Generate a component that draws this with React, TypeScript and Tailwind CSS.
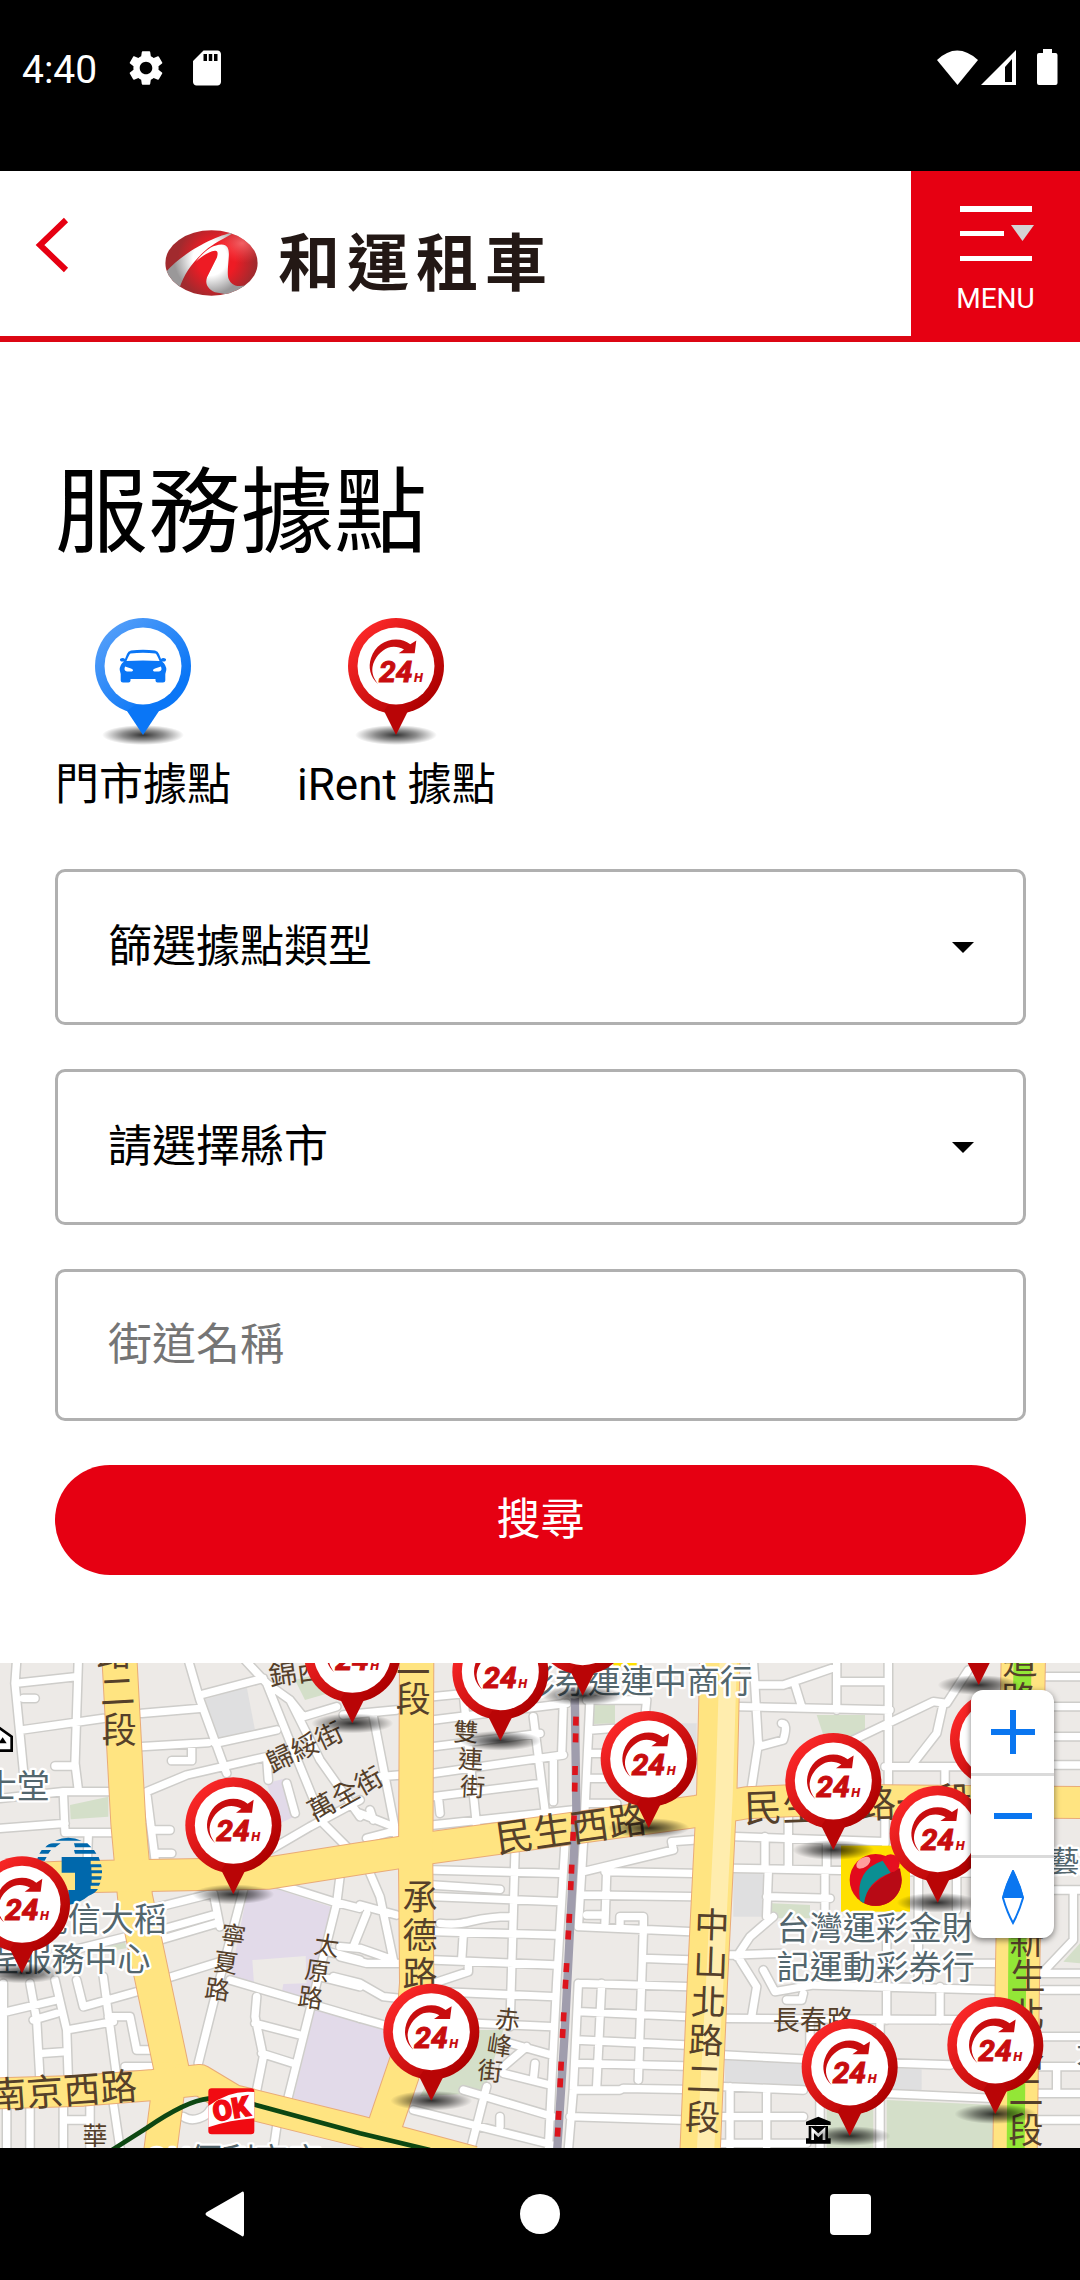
import * as React from "react";
import { useState } from "react";
import { MdSettings, MdSdCard } from "react-icons/md";

interface MapLabel {
  text: string;
  x: number;
  y: number;
  size: number;
  rotate?: number;
  poi?: boolean;
}

const BRANCH_TYPES = ["篩選據點類型", "門市據點", "iRent 據點"];
const CITIES = ["請選擇縣市", "台北市", "新北市", "桃園市"];

// map units: 3 units = 1px
const PINS = [
  [2994, 475],
  [2936, 105],
  [1748, 137],
  [1057, 220],
  [1501, 272],
  [1946, 534],
  [2500, 600],
  [700, 733],
  [2813, 758],
  [66, 970],
  [1294, 1352],
  [2986, 1392],
  [2549, 1458],
];

const AREAS = [
  { fill: "#dfdfe0", d: "M610 150L740 110L765 240L645 280Z" },
  { fill: "#d4dfc9", d: "M210 465L325 440V500L212 508Z" },
  { fill: "#d4dfc9", d: "M885 90L960 70L985 130L915 150Z" },
  { fill: "#d4dfc9", d: "M260 880L370 855L380 895L270 912Z" },
  { fill: "#e2dae9", d: "M800 400L858 385L882 500L840 520Z" },
  { fill: "#e2dae9", d: "M745 710H810L992 770L930 1068L690 990Z" },
  { fill: "#edeae7", d: "M757 930L917 918L920 1000L850 1002L845 1030L762 1002Z" },
  { fill: "#e2dae9", d: "M945 1080L1180 1140V1220L1118 1408L880 1345Z" },
  { fill: "#d4dfc9", d: "M1780 165H1845V220L1780 222Z" },
  { fill: "#d4dfc9", d: "M1370 1140H1510L1450 1330L1260 1338Z" },
  { fill: "#dfdfe0", d: "M2000 220H2090V290H2030Z" },
  { fill: "#d4dfc9", d: "M2450 195H2595V260L2470 255Z" },
  { fill: "#dfdfe0", d: "M2200 670H2290V800H2200Z" },
  { fill: "#d4dfc9", d: "M2315 760L2430 765V805H2315Z" },
  { fill: "#dfdfe0", d: "M2175 1230L2765 1258V1325L2175 1295Z" },
  { fill: "#d4dfc9", d: "M2660 1350L2980 1365V1494H2660Z" },
  { fill: "#d4dfc9", d: "M2480 1370H2620V1494H2480Z" },
  { fill: "#d4dfc9", d: "M3240 880L3190 935L3240 940Z" },
];

const STREETS_WEST =
  "M50 30L45 100L75 410M45 100L230 80M235 30L225 340L235 420M65 240L310 205M70 145H105M165 348H225M0 445L190 425H330M190 425L195 548H340M0 535L195 520M265 550L262 630M425 190L600 175M425 290L625 278M565 30L600 150L680 370M600 135L790 85M515 332H575V290M440 425L560 375L800 320M645 280L830 240M735 30L800 100L880 300L970 520L1050 600M800 100L870 150L960 330L1080 500M870 150L910 200L1010 170M860 400L885 490M810 600L930 530L1080 450M440 430L465 625M465 540H510M470 610H515M460 775L640 730L660 830M480 870L650 820M500 985L660 935M730 720L640 1060L595 1240M810 695L1000 755L1080 775M1020 680L1010 760L930 1080L865 1340M690 990L1080 1105M770 1040L765 1100L790 1220L770 1320M765 1120L900 1155M785 1210L880 1240M985 905L1080 930M960 980L1080 1010M0 1090L170 1050M90 1000L110 1110L120 1290M100 1110L170 1090M165 990L200 1140L205 1290M200 1140L340 1115M230 990L250 1070L410 1025M310 980L350 1280M325 1100H390L410 1200H455M125 1210L200 1205M375 1250H465M10 1000V1290M90 1370V1494M190 1370V1494M20 1370V1494M270 1360V1494M200 1410H270M340 1360L360 1494M550 1400C580 1420 620 1400 630 1380M830 1430L820 1500M380 39L400 500M800 320L805 390M480 840L640 795M180 910L380 860";

const STREETS_CENTER =
  "M220 140L320 130M220 210L620 160M220 290L540 250M220 370L610 315M220 440L540 400M220 525L640 480M520 200L555 480M310 130L350 530M610 160L605 315M580 320V455M235 440L240 490M40 200L110 560M-50 195L110 180M60 380L120 375M0 490L100 530M20 565L115 540M465 610L450 1130M220 660L600 670M215 705L420 718M220 740L600 755M240 820C330 830 330 800 450 800M225 845L590 855M225 930L585 945M310 850L305 930M325 950V965L220 1000M235 1025L580 1040M350 1120L575 1130M450 1180L575 1215M430 1270L570 1305M310 1320L580 1400M160 1380L580 1485M520 1290L525 1240M380 1310L335 1485M420 1400V1430M430 1250L500 1190M615 580L590 1000L565 1500M690 150L670 580L655 830M680 150H860M690 240L760 235M690 310H740M690 385H740M690 460H770M670 665L940 600L935 575L1000 570M735 665L1000 670M670 735L995 740M660 830L990 845M740 665L735 820M680 795H730M780 830V800H850V840M850 840L835 1290M850 925L990 930M655 1000L985 1010M655 1085L980 1100M650 1170L975 1185M650 1240L970 1248M640 1320H780L790 1315L965 1318M630 1400L965 1410M655 1000L640 1320L625 1500M725 1000L710 1310M860 150L855 200M30 670L60 740L100 930M0 765L110 795M-60 890L0 895L100 930M-60 920L20 940H120M-80 980L0 1000L70 1040L120 1045M0 1105L90 1130M20 790L-20 890M30 480L40 510";

const STREETS_EAST =
  "M100 30L115 280L95 410M60 170L510 180M115 105H190L350 50M350 30V180M360 95H500M505 30V400M225 105L245 170M115 290L190 270Q205 220 185 220M400 270L640 155L680 160L745 60M670 160L650 250L580 340M495 350H840M675 350V405M980 80H1090M980 170H1090M990 260H1090M990 345H1090M205 500V655M45 560L490 575M40 655L830 670M135 560V655M320 570V655M140 740L330 745M145 660L140 800M315 660V780M160 800L90 860L50 920M30 915L180 910M60 930L110 1010L95 1100M130 960L165 1025L280 1005L830 1020M200 1050H245L250 1030M20 1105L830 1110M500 870V1110M660 1010V1110M10 1215L400 1235L690 1245M10 1310L250 1320M30 1310V1500M140 1320V1500M0 1400H130M140 1400H250M480 1110V1500M490 1330L820 1345M0 1480H260M270 1110V1215M300 1320V1500M495 500V580M595 670V1010M700 940H830M975 960L1060 870V720M960 970H1090M965 1020H1090M1000 720H1090M955 1160H1090M955 1250H1090M955 1330H1090M955 1410H1090M1010 1250V1330M710 670V780";

const LABELS: MapLabel[] = [
  { text: "路", x: 342, y: 14, size: 105 },
  { text: "二", x: 352, y: 128, size: 105, rotate: -3 },
  { text: "段", x: 358, y: 243, size: 105 },
  { text: "錦西", x: 890, y: 68, size: 84, rotate: -8 },
  { text: "歸綏街", x: 915, y: 293, size: 81, rotate: -25 },
  { text: "萬全街", x: 1037, y: 433, size: 81, rotate: -29 },
  { text: "寧", x: 700, y: 858, size: 75, rotate: 8 },
  { text: "夏", x: 677, y: 940, size: 75, rotate: 8 },
  { text: "路", x: 652, y: 1020, size: 75, rotate: 8 },
  { text: "太", x: 980, y: 888, size: 75, rotate: 8 },
  { text: "原", x: 952, y: 965, size: 75, rotate: 8 },
  { text: "路", x: 932, y: 1045, size: 75, rotate: 8 },
  { text: "南京西路", x: 190, y: 1325, size: 111, rotate: -4 },
  { text: "華", x: 285, y: 1460, size: 75 },
  { text: "二", x: 1240, y: 38, size: 105 },
  { text: "段", x: 1240, y: 152, size: 105 },
  { text: "雙", x: 1398, y: 248, size: 75, rotate: 3 },
  { text: "連", x: 1412, y: 330, size: 75, rotate: 3 },
  { text: "街", x: 1418, y: 412, size: 75, rotate: 3 },
  { text: "民生西路", x: 1713, y: 538, size: 114, rotate: -8 },
  { text: "承", x: 1260, y: 745, size: 105 },
  { text: "德", x: 1260, y: 860, size: 105 },
  { text: "路", x: 1260, y: 975, size: 105 },
  { text: "赤", x: 1523, y: 1110, size: 75, rotate: 6 },
  { text: "峰", x: 1498, y: 1188, size: 75, rotate: 9 },
  { text: "街", x: 1470, y: 1265, size: 75, rotate: 6 },
  { text: "中", x: 2136, y: 828, size: 105, rotate: 2 },
  { text: "山", x: 2132, y: 942, size: 105, rotate: 2 },
  { text: "北", x: 2126, y: 1060, size: 105, rotate: 2 },
  { text: "路", x: 2118, y: 1175, size: 105, rotate: 2 },
  { text: "二", x: 2112, y: 1290, size: 105, rotate: 2 },
  { text: "段", x: 2108, y: 1406, size: 105, rotate: 2 },
  { text: "民生東路一段", x: 2574, y: 466, size: 114, rotate: -2 },
  { text: "長春路", x: 2440, y: 1112, size: 81 },
  { text: "道", x: 3060, y: 38, size: 105 },
  { text: "路", x: 3056, y: 150, size: 105 },
  { text: "新", x: 3080, y: 878, size: 105 },
  { text: "生", x: 3084, y: 982, size: 105 },
  { text: "北", x: 3082, y: 1100, size: 105 },
  { text: "路", x: 3080, y: 1215, size: 105 },
  { text: "二", x: 3078, y: 1330, size: 105 },
  { text: "段", x: 3078, y: 1445, size: 105 },
  { text: "士堂", x: 50, y: 410, size: 99, poi: true },
  { text: "電信大稻", x: 302, y: 808, size: 99, poi: true },
  { text: "埕服務中心", x: 204, y: 928, size: 99, poi: true },
  { text: "OK便利商店", x: 700, y: 1530, size: 99, poi: true },
  { text: "彩券連連中商行", x: 1912, y: 93, size: 99, poi: true },
  { text: "台灣運彩金財", x: 2627, y: 834, size: 99, poi: true },
  { text: "記運動彩券行", x: 2627, y: 952, size: 99, poi: true },
  { text: "藝文", x: 3238, y: 636, size: 87, poi: true },
  { text: "大", x: 3272, y: 1210, size: 87, poi: true },
];

function Gradients() {
  return (
    <svg className="absolute h-0 w-0" aria-hidden="true">
      <defs>
        <linearGradient id="ringRed" x1="0.1" y1="0.1" x2="0.85" y2="0.85">
          <stop offset="0" stopColor="#ff2a2a" />
          <stop offset="1" stopColor="#ae0000" />
        </linearGradient>
        <linearGradient id="ringBlue" x1="0.1" y1="0.1" x2="0.75" y2="0.8">
          <stop offset="0" stopColor="#559ff9" />
          <stop offset="1" stopColor="#0a76f6" />
        </linearGradient>
        <radialGradient id="pinShadow">
          <stop offset="0" stopColor="#000" stopOpacity="0.8" />
          <stop offset="0.5" stopColor="#000" stopOpacity="0.45" />
          <stop offset="1" stopColor="#000" stopOpacity="0" />
        </radialGradient>
      </defs>
    </svg>
  );
}

// the tip of the pin sits at 0,0
function RentPin() {
  return (
    <g>
      <ellipse rx="41" ry="10" fill="url(#pinShadow)" />
      <circle cy="-69" r="48" fill="url(#ringRed)" />
      <path d="M-12 -24L0 0L12 -24L8 -30H-8Z" fill="#b90506" />
      <circle cy="-69" r="38.5" fill="#fff" />
      <path
        d="M-18 -51C-26 -58 -28 -68 -25 -77C-21 -89 -11 -95.500 0 -95.500C6 -95.500 10 -94 14.300 -90.700L20.300 -94.500L18.700 -81.700H2.700L8 -85.500C3 -88.500 -3 -89 -8 -87.300C-15 -84.500 -22 -77 -23.500 -68C-24.500 -62 -22 -56 -18 -51Z"
        fill="#c80d0f"
      />
      <text
        x="-17"
        y="-53"
        fontSize="30"
        strokeWidth="1"
        className="fill-[#c80d0f] stroke-[#c80d0f] font-['Roboto',sans-serif] font-bold italic"
      >
        24
      </text>
      <text
        x="18"
        y="-53"
        fontSize="13"
        className="fill-[#c80d0f] font-['Roboto',sans-serif] font-black italic"
      >
        H
      </text>
    </g>
  );
}

function StorePin() {
  return (
    <g>
      <ellipse rx="41" ry="10" fill="url(#pinShadow)" />
      <circle cy="-69" r="48" fill="url(#ringBlue)" />
      <path d="M-16 -24L0 0L16 -24L8 -30H-8Z" fill="#0a76f6" />
      <circle cy="-69" r="38.5" fill="#fff" />
      <path
        fillRule="evenodd"
        fill="#0a76f6"
        d="M-12 -84.500Q0 -86 12 -84.500Q15 -84 16 -81L18 -76Q20 -78 23 -76Q23.500 -73 19 -73.500Q23.500 -70 23.300 -65L22.300 -61V-54.500Q22.300 -52.500 20 -52.500H14.500Q12.500 -52.500 12.500 -54.500V-56H-12.500V-54.500Q-12.500 -52.500 -14.500 -52.500H-20Q-22.300 -52.500 -22.300 -54.500V-61L-23.300 -65Q-23.500 -70 -19 -73.500Q-23.500 -73 -23 -76Q-20 -78 -18 -76L-16 -81Q-15 -84 -12 -84.500ZM-12.500 -81.500Q-14 -80.500 -16.500 -74Q0 -75 16.500 -74Q14 -80.500 12.500 -81.500Q0 -83 -12.500 -81.500ZM-18 -68.500Q-19.500 -64 -16 -63.500H-11Q-8.500 -65 -12 -66.500ZM18 -68.500Q19.500 -64 16 -63.500H11Q8.500 -65 12 -66.500Z"
      />
    </g>
  );
}

function BrandMark() {
  return (
    <svg viewBox="29 29 281 200" className="h-[66px] w-[93px]" aria-hidden="true">
      <defs>
        <radialGradient id="brandRed" gradientUnits="userSpaceOnUse" cx="185" cy="120" r="140">
          <stop offset="0.4" stopColor="#ee1b24" />
          <stop offset="0.85" stopColor="#a12a2e" />
        </radialGradient>
        <radialGradient id="brandShine" cx="0.83" cy="0.2" r="0.3">
          <stop offset="0" stopColor="#ff7074" stopOpacity="0.8" />
          <stop offset="1" stopColor="#ff4a4f" stopOpacity="0" />
        </radialGradient>
        <radialGradient id="brandSilver" gradientUnits="userSpaceOnUse" cx="165" cy="115" r="115">
          <stop offset="0.45" stopColor="#fff" />
          <stop offset="0.95" stopColor="#9a9899" />
        </radialGradient>
        <clipPath id="brandClip">
          <ellipse cx="169.500" cy="129" rx="140" ry="99" />
        </clipPath>
      </defs>
      <g clipPath="url(#brandClip)">
        <rect x="29" y="29" width="281" height="200" fill="url(#brandRed)" />
        <rect x="29" y="29" width="281" height="200" fill="url(#brandShine)" />
        <path
          d="M240 36C195 42 90 88 28 160L72 206C88 160 110 128 150 92C175 70 208 55 240 36Z"
          fill="url(#brandSilver)"
        />
        <path
          d="M122 125C148 92 172 74 200 73C220 74 223 88 222 108C220 140 216 165 222 178C230 196 246 203 275 196L240 228L180 218C155 205 150 190 156 172L186 112C190 98 188 91 180 92C162 94 145 105 122 125Z"
          fill="url(#brandSilver)"
        />
      </g>
    </svg>
  );
}

function StatusBar() {
  return (
    <div className="flex h-[171px] items-start bg-black pt-[47px] pr-[22px] pl-[22px] text-white">
      <span className="text-[39px] leading-[46px]">4:40</span>
      <MdSettings className="ml-[28px] size-[42px]" />
      <MdSdCard className="ml-[19px] size-[42px]" />
      <svg viewBox="0 0 122 38" className="ml-auto h-[38px] w-[122px]" fill="#fff" aria-hidden="true">
        <path d="M1 13Q21 -6 42 13L21.500 38Z" />
        <path fillRule="evenodd" d="M45 38L80 3V38ZM69 20V35H76V12Z" />
        <path d="M107 2H116V6H119.500Q121.500 6 121.500 8V36Q121.500 38 119.500 38H103Q101 38 101 36V8Q101 6 103 6H107Z" />
      </svg>
    </div>
  );
}

function Header() {
  return (
    <header className="flex h-[171px] bg-white">
      <div className="flex flex-1 border-b-[6px] border-[#dc0714]">
        <button type="button" aria-label="返回" className="mt-[46px] ml-[32px] h-[58px] w-[40px]">
          <svg viewBox="0 0 40 58" className="h-full w-full" aria-hidden="true">
            <path d="M34 3L8 28L34 53" fill="none" stroke="#e60012" strokeWidth="6" />
          </svg>
        </button>
        <a href="#" className="mt-[58px] ml-[93px] flex h-[68px] items-center gap-[20px]">
          <BrandMark />
          <span className="flex gap-[7px] pt-[4px] text-[62px] leading-[64px] font-bold text-[#231815]">
            <span>和</span>
            <span>運</span>
            <span>租</span>
            <span>車</span>
          </span>
        </a>
      </div>
      <button
        type="button"
        className="flex w-[169px] flex-col items-center bg-[#e60012] pt-[34px] text-[28px] leading-[34px] text-white"
      >
        <svg viewBox="0 0 76 58" className="mb-[19px] h-[58px] w-[76px]" aria-hidden="true">
          <path d="M2 1H74V7H2ZM2 26H46V31H2ZM2 51H74V56H2Z" fill="#fff" />
          <path d="M53 20H76L64.500 36Z" fill="#d4d4d4" />
        </svg>
        MENU
      </button>
    </header>
  );
}

function SelectField({ id, label, options }: { id: string; label: string; options: string[] }) {
  return (
    <div className="relative">
      <label htmlFor={id} className="sr-only">
        {label}
      </label>
      <select
        id={id}
        className="block h-[156px] w-full appearance-none rounded-[10px] border-[3px] border-[#b0b0b0] bg-white px-[50px] text-[44px] text-black"
      >
        {options.map((el) => (
          <option key={el}>{el}</option>
        ))}
      </select>
      <svg
        viewBox="0 0 22 11"
        className="pointer-events-none absolute top-[73px] right-[52px] h-[11px] w-[22px]"
        aria-hidden="true"
      >
        <path d="M0 0H22L11 11Z" />
      </svg>
    </div>
  );
}

function BranchMap() {
  const west = { d: STREETS_WEST };
  const center = { d: STREETS_CENTER, transform: "translate(1080 0)" };
  const east = { d: STREETS_EAST, transform: "translate(2160 0)" };
  const mainRoads = [
    { d: "M358 20L385 520L405 740L515 1260", w: 102 },
    { d: "M515 1240L480 1510", w: 96 },
    { d: "M-20 690L200 681L480 676L800 670L1080 626L1300 592L2090 484L2240 458L2420 450L3260 458", w: 93 },
    { d: "M1250 20L1247 640L1250 1000L1235 1190L1150 1440", w: 100 },
    { d: "M-20 1330L250 1322L460 1305L600 1290L700 1350L1080 1444L1420 1535", w: 90 },
    { d: "M2160 20L2150 440L2122 1000L2100 1510", w: 118 },
    { d: "M3070 20L3052 1000L3045 1510", w: 130 },
  ];

  return (
    <svg
      viewBox="0 39 3240 1455"
      preserveAspectRatio="xMidYMid slice"
      className="h-full w-full"
      role="img"
      aria-label="據點地圖"
    >
      <rect y="39" width="3240" height="1455" fill="#edeae7" />
      {AREAS.map((el, index) => (
        <path key={index} d={el.d} fill={el.fill} />
      ))}
      <g fill="none" stroke="#cecdca" strokeWidth="31" strokeLinecap="round" strokeLinejoin="round">
        <path {...west} />
        <path {...center} />
        <path {...east} />
      </g>
      <g fill="none" stroke="#fff" strokeWidth="22" strokeLinecap="round" strokeLinejoin="round">
        <path {...west} />
        <path {...center} />
        <path {...east} />
      </g>
      <g fill="none" stroke="#e9ab78" strokeLinejoin="round">
        {mainRoads.map((el) => (
          <path key={el.d} d={el.d} strokeWidth={el.w + 6} />
        ))}
      </g>
      <g fill="none" stroke="#ffe481" strokeLinejoin="round">
        {mainRoads.map((el) => (
          <path key={el.d} d={el.d} strokeWidth={el.w} />
        ))}
      </g>
      <path d="M2185 20L2172 440L2144 1000L2116 1510" fill="none" stroke="#ffedae" strokeWidth="52" />
      <path d="M3068 20L3052 900L3047 1510" fill="none" stroke="#93e637" strokeWidth="54" />

      {/* railway */}
      <path d="M1724 100L1729 480L1712 800L1694 1150L1671 1510" fill="none" stroke="#a09dad" strokeWidth="25" />
      <path
        d="M1728 200L1723 480L1708 800L1688 1150L1670 1510"
        fill="none"
        stroke="#dc141c"
        strokeWidth="17"
        strokeDasharray="27 23 27 71"
      />
      {/* metro */}
      <path
        d="M330 1504L440 1434Q560 1352 625 1346Q700 1340 765 1364L1080 1450L1290 1500"
        fill="none"
        stroke="#0d4712"
        strokeWidth="14"
      />

      {/* telecom office */}
      <g fill="#0068ac">
        <path d="M165 572Q205 554 245 572Z" />
        <path d="M136 592Q145 580 160 580H182L166 592ZM222 580H262L274 592H225ZM118 611L125 600H153L145 611ZM222 600H282L289 611H225ZM110 632L114 621H140L134 632Z" />
        <path d="M185 621H296L300 632H272V643H303L305 652H274V661H306V670H275V679H305L303 689H275V698H301L297 707H272V717H294Q285 730 265 738Q240 760 205 765V720H225V668H185Z" />
      </g>
      {/* convenience store */}
      <g>
        <rect x="625" y="1315" width="138" height="138" rx="10" fill="#f10b12" />
        <path d="M625 1368Q690 1318 763 1326V1405Q690 1410 625 1432Z" fill="#fff" />
        <text
          x="694"
          y="1406"
          fontSize="84"
          strokeWidth="4"
          textAnchor="middle"
          transform="rotate(-10 694 1380)"
          className="fill-[#f10b12] stroke-[#f10b12] font-['Roboto',sans-serif] font-black"
        >
          OK
        </text>
      </g>
      {/* lottery shop */}
      <g>
        <rect x="1840" y="30" width="70" height="20" fill="#ffe000" />
        <rect x="2523" y="587" width="207" height="198" fill="#ffe000" />
        <circle cx="2627" cy="690" r="78" fill="#e20a1c" />
        <path d="M2705 690A78 78 0 0 1 2588 757Q2600 700 2700 655Z" fill="#b80a15" />
        <circle cx="2672" cy="640" r="27" fill="#e60f20" />
        <path d="M2580 752Q2565 660 2648 632L2672 668Q2600 695 2592 760Z" fill="#0b8f93" />
        <ellipse cx="2590" cy="638" rx="24" ry="14" fill="#ff9d9d" transform="rotate(-35 2590 638)" />
      </g>
      {/* museums */}
      <g>
        <path d="M-25 255L0 235L35 260V302H-25Z" fill="#fff" stroke="#000" strokeWidth="8" />
        <path d="M-5 280L8 262L20 280Z" />
        <path d="M2418 1425V1415L2455 1400L2492 1415V1425ZM2426 1428H2484V1465H2492V1481H2418V1465H2426Z" />
        <path d="M2438 1470V1440L2455 1456L2472 1440V1470" fill="none" stroke="#fff" strokeWidth="8" />
      </g>

      {LABELS.map((el, index) => (
        <text
          key={index}
          x={el.x}
          y={el.y}
          fontSize={el.size}
          textAnchor="middle"
          dominantBaseline="central"
          transform={`rotate(${el.rotate ?? 0} ${el.x} ${el.y})`}
          className={
            el.poi
              ? "fill-[#53666d] stroke-white stroke-[14px] [paint-order:stroke] [stroke-linejoin:round]"
              : "fill-[#55402a]"
          }
        >
          {el.text}
        </text>
      ))}

      {PINS.map(([x, y]) => (
        <g key={`${x}-${y}`} transform={`translate(${x} ${y}) scale(3)`}>
          <RentPin />
        </g>
      ))}
    </svg>
  );
}

function MapControls() {
  return (
    <div className="absolute top-[27px] right-[26px] flex w-[83px] flex-col divide-y-[3px] divide-[#dadada] overflow-hidden rounded-[12px] bg-white shadow-[0_2px_6px_rgba(0,0,0,0.5)]">
      <button type="button" aria-label="放大" className="flex h-[86px] items-center justify-center">
        <svg viewBox="0 0 44 44" className="size-[44px]" aria-hidden="true">
          <path d="M0 22H44M22 0V44" stroke="#0a76f0" strokeWidth="6" />
        </svg>
      </button>
      <button type="button" aria-label="縮小" className="flex h-[82px] items-center justify-center">
        <svg viewBox="0 0 44 44" className="size-[44px]" aria-hidden="true">
          <path d="M3 22H41" stroke="#0a76f0" strokeWidth="6" />
        </svg>
      </button>
      <button type="button" aria-label="指北" className="flex h-[80px] items-center justify-center">
        <svg viewBox="0 0 24 56" className="h-[56px] w-[24px]" aria-hidden="true">
          <path d="M12 1Q18 14 22 28Q18 42 12 53Q6 42 2 28Q6 14 12 1Z" fill="#fff" stroke="#0a76f0" strokeWidth="2" />
          <path d="M12 0Q20 14 23 28H1Q4 14 12 0Z" fill="#0a76f0" />
        </svg>
      </button>
    </div>
  );
}

function NavBar() {
  return (
    <nav className="flex h-[132px] items-center justify-between bg-black pr-[191px] pl-[187px]">
      <button type="button" aria-label="Back" className="size-[76px]">
        <svg viewBox="0 0 76 76" fill="#fff" aria-hidden="true">
          <path d="M54 16.500Q57 14 57 18V58Q57 62 54 59.500L20 40Q17 38 20 36Z" />
        </svg>
      </button>
      <button type="button" aria-label="Home" className="size-[76px]">
        <svg viewBox="0 0 76 76" fill="#fff" aria-hidden="true">
          <circle cx="40" cy="38" r="20" />
        </svg>
      </button>
      <button type="button" aria-label="Recents" className="size-[76px]">
        <svg viewBox="0 0 76 76" fill="#fff" aria-hidden="true">
          <rect x="17" y="18" width="41" height="41" rx="4" />
        </svg>
      </button>
    </nav>
  );
}

function App() {
  const [street, setStreet] = useState("");

  return (
    <div className="w-full bg-white font-['Roboto','Noto_Sans_CJK_TC',sans-serif] text-black">
      <Gradients />
      <StatusBar />
      <Header />
      <main>
        <section className="pt-[112px] pr-[54px] pb-[88px] pl-[55px]">
          <h1 className="text-[93px] leading-[120px]">服務據點</h1>
          <div className="mt-[42px] flex gap-[66px] text-[44px] leading-[60px]">
            <div className="flex flex-col items-center">
              <svg viewBox="-48 -119 96 132" className="mb-[7px] h-[132px] w-[96px]" aria-hidden="true">
                <StorePin />
              </svg>
              <span>門市據點</span>
            </div>
            <div className="flex flex-col items-center">
              <svg viewBox="-48 -119 96 132" className="mb-[7px] h-[132px] w-[96px]" aria-hidden="true">
                <RentPin />
              </svg>
              <span>iRent 據點</span>
            </div>
          </div>
          <form className="mt-[54px] flex flex-col gap-[44px]" onSubmit={(e) => e.preventDefault()}>
            <SelectField id="branch-type" label="據點類型" options={BRANCH_TYPES} />
            <SelectField id="city" label="縣市" options={CITIES} />
            <div>
              <label htmlFor="street" className="sr-only">
                街道名稱
              </label>
              <input
                id="street"
                type="text"
                placeholder="街道名稱"
                value={street}
                onChange={(e) => setStreet(e.target.value)}
                className="block h-[152px] w-full rounded-[10px] border-[3px] border-[#b0b0b0] px-[50px] text-[44px] placeholder:text-[#757575]"
              />
            </div>
            <button
              type="submit"
              className="h-[110px] w-full rounded-full bg-[#e60012] text-[44px] leading-[60px] text-white"
            >
              搜尋
            </button>
          </form>
        </section>
        <section className="relative h-[485px] overflow-hidden">
          <BranchMap />
          <MapControls />
        </section>
      </main>
      <NavBar />
    </div>
  );
}

export default App;
